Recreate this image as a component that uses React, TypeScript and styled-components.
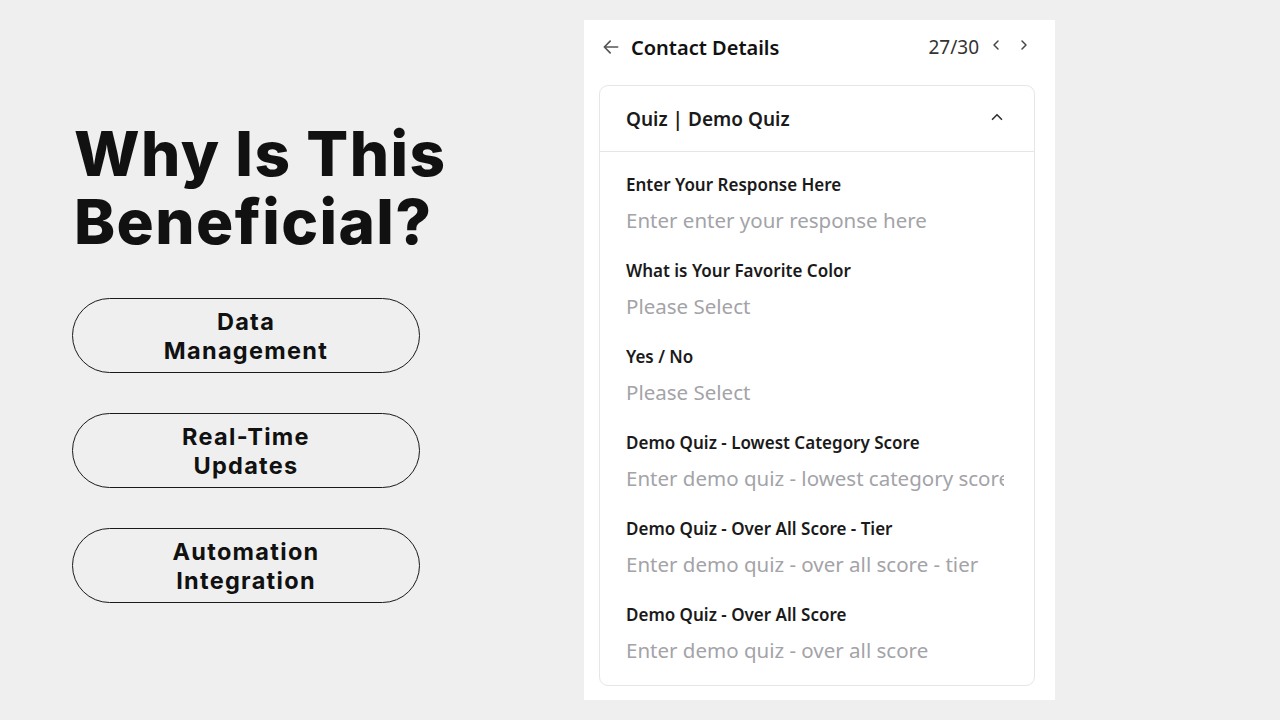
import React from "react";
import styled, { createGlobalStyle } from "styled-components";

const Global = createGlobalStyle`
  html, body { margin: 0; padding: 0; }
  body { background: #efefef; width: 1280px; height: 720px; overflow: hidden; }
  * { box-sizing: border-box; }
`;

const Page = styled.div`
  width: 1280px;
  height: 720px;
  display: flex;
  background: #efefef;
`;

const Left = styled.div`
  width: 584px;
  padding: 120px 0 0 72px;
  display: flex;
  flex-direction: column;
`;

const Title = styled.h1`
  margin: 0 0 42px 2px;
  font-family: "Inter", "Liberation Sans", sans-serif;
  font-weight: 800;
  font-size: 62px;
  line-height: 68px;
  letter-spacing: 1.4px;
  color: #111;
`;

const Pills = styled.div`
  display: flex;
  flex-direction: column;
  gap: 40px;
`;

const Pill = styled.div`
  width: 348px;
  height: 75px;
  border: 1.5px solid #1a1a1a;
  border-radius: 38px;
  display: flex;
  align-items: center;
  justify-content: center;
  text-align: center;
  font-family: "Inter", "Liberation Sans", sans-serif;
  font-weight: 700;
  font-size: 23.5px;
  line-height: 29px;
  letter-spacing: 1.3px;
  color: #111;
`;

const Panel = styled.div`
  margin-top: 20px;
  width: 471px;
  height: 680px;
  background: #fff;
  padding: 0 20px 0 15px;
  display: flex;
  flex-direction: column;
  font-family: "Noto Sans", "Open Sans", sans-serif;
`;

const TopBar = styled.div`
  height: 56px;
  padding-bottom: 2px;
  padding-right: 3px;
  display: flex;
  align-items: center;
`;

const BackBtn = styled.div`
  display: flex;
  color: #555;
  margin: 0 10px 0 2px;
`;

const PanelTitle = styled.div`
  font-size: 20px;
  font-weight: 600;
  color: #111;
  flex: 1;
`;

const Counter = styled.div`
  font-size: 19px;
  color: #333;
  margin-right: 1px;
`;

const NavBtn = styled.div<{ $gap: number }>`
  display: flex;
  color: #444;
  margin-left: ${(p) => p.$gap}px;
  margin-top: -4px;
`;

const Card = styled.div`
  margin-top: 9px;
  border: 1px solid #e6e6e6;
  border-radius: 9px;
  flex: 1;
  margin-bottom: 14px;
  display: flex;
  flex-direction: column;
`;

const CardHead = styled.div`
  height: 66px;
  border-bottom: 1px solid #e6e6e6;
  display: flex;
  align-items: center;
  justify-content: space-between;
  padding: 0 28px 0 26px;
`;

const CardTitle = styled.div`
  font-size: 19px;
  font-weight: 600;
  color: #1a1a1a;
`;

const HeadIcon = styled.span`
  display: flex;
  color: #333;
  margin-top: -3px;
`;

const Fields = styled.div`
  padding: 21px 26px 0;
  display: flex;
  flex-direction: column;
  gap: 23px;
`;

const Field = styled.div`
  display: flex;
  flex-direction: column;
  gap: 8px;
`;

const Label = styled.div`
  font-size: 17px;
  font-weight: 600;
  color: #1a1a1a;
  line-height: 24px;
`;

const Placeholder = styled.div`
  font-size: 20.5px;
  color: #a3a3a8;
  line-height: 31px;
  white-space: nowrap;
  overflow: hidden;
  width: 378px;
`;

const Chevron = ({ d, size = 18 }: { d: string; size?: number }) => (
  <svg width={size} height={size} viewBox="0 0 24 24" fill="none" stroke="currentColor" strokeWidth={2.2} strokeLinecap="round" strokeLinejoin="round">
    <path d={d} />
  </svg>
);

const fields = [
  ["Enter Your Response Here", "Enter enter your response here"],
  ["What is Your Favorite Color", "Please Select"],
  ["Yes / No", "Please Select"],
  ["Demo Quiz - Lowest Category Score", "Enter demo quiz - lowest category score"],
  ["Demo Quiz - Over All Score - Tier", "Enter demo quiz - over all score - tier"],
  ["Demo Quiz - Over All Score", "Enter demo quiz - over all score"],
];

export default function App() {
  return (
    <>
      <Global />
      <Page>
        <Left>
          <Title>
            Why Is This
            <br />
            Beneficial?
          </Title>
          <Pills>
            <Pill>Data<br />Management</Pill>
            <Pill>Real-Time<br />Updates</Pill>
            <Pill>Automation<br />Integration</Pill>
          </Pills>
        </Left>
        <Panel>
          <TopBar>
            <BackBtn>
              <svg width="20" height="20" viewBox="0 0 24 24" fill="none" stroke="currentColor" strokeWidth={2} strokeLinecap="round" strokeLinejoin="round">
                <path d="M20 12H4M11 5l-7 7 7 7" />
              </svg>
            </BackBtn>
            <PanelTitle>Contact Details</PanelTitle>
            <Counter>27/30</Counter>
            <NavBtn $gap={8}><Chevron d="M15 6l-6 6 6 6" size={16} /></NavBtn>
            <NavBtn $gap={12}><Chevron d="M9 6l6 6-6 6" size={16} /></NavBtn>
          </TopBar>
          <Card>
            <CardHead>
              <CardTitle>Quiz | Demo Quiz</CardTitle>
              <HeadIcon>
                <Chevron d="M6 15l6-6 6 6" size={18} />
              </HeadIcon>
            </CardHead>
            <Fields>
              {fields.map(([l, p]) => (
                <Field key={l}>
                  <Label>{l}</Label>
                  <Placeholder>{p}</Placeholder>
                </Field>
              ))}
            </Fields>
          </Card>
        </Panel>
      </Page>
    </>
  );
}
